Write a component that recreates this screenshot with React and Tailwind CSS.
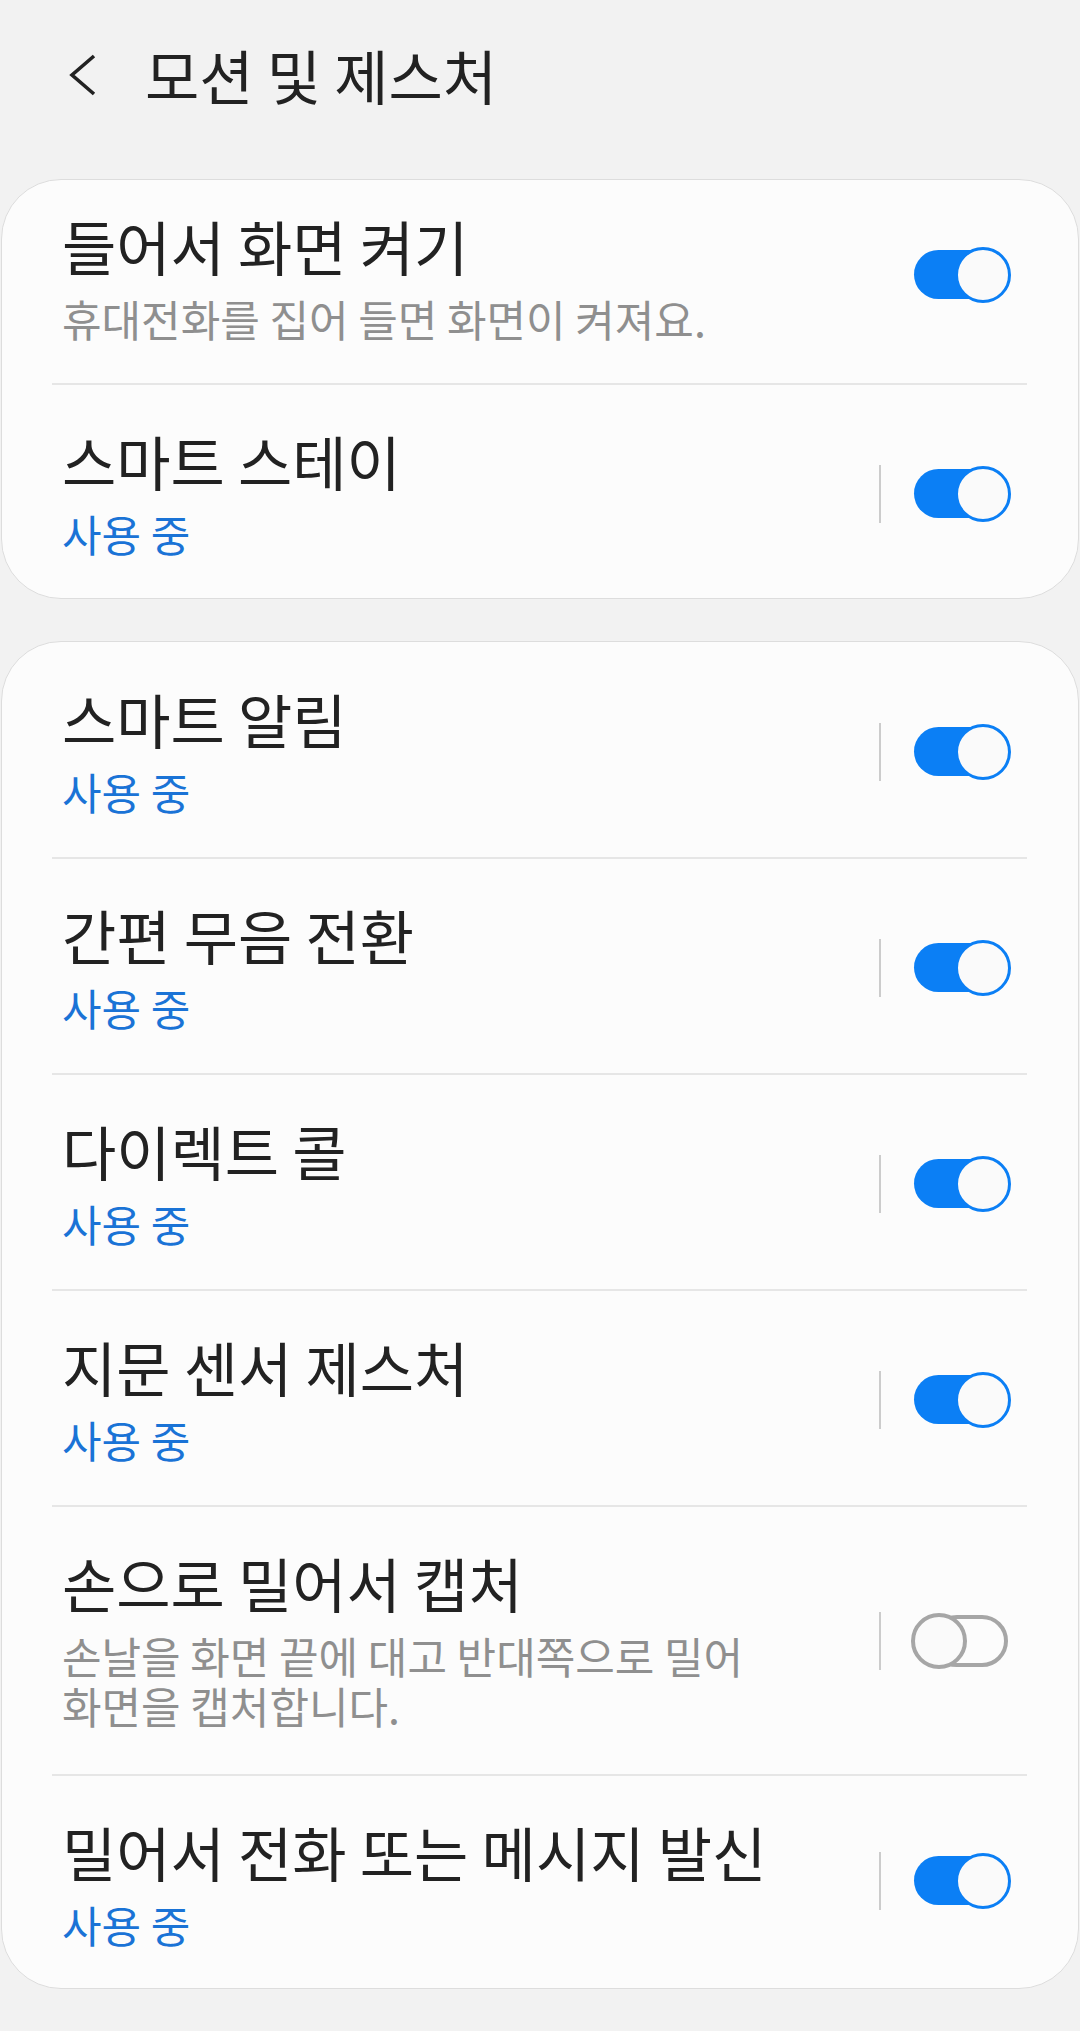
const FONT = { fontFamily: '"Noto Sans CJK KR", "Noto Sans", sans-serif' };

const firstCard = [
  {
    title: '들어서 화면 켜기',
    sub: ['휴대전화를 집어 들면 화면이 켜져요.'],
    tone: 'gray',
    on: true,
    noSep: true,
    pad: 'pt-[34px] pb-[40px]',
    lift: true,
  },
  { title: '스마트 스테이', sub: ['사용 중'], tone: 'blue', on: true, pad: 'pt-[44px] pb-[40px]' },
];

const secondCard = [
  { title: '스마트 알림', sub: ['사용 중'], tone: 'blue', on: true, pad: 'pt-[45px] pb-[41px]' },
  { title: '간편 무음 전환', sub: ['사용 중'], tone: 'blue', on: true, pad: 'pt-[44px] pb-[41px]' },
  { title: '다이렉트 콜', sub: ['사용 중'], tone: 'blue', on: true, pad: 'pt-[44px] pb-[41px]' },
  { title: '지문 센서 제스처', sub: ['사용 중'], tone: 'blue', on: true, pad: 'pt-[44px] pb-[41px]' },
  {
    title: '손으로 밀어서 캡처',
    sub: ['손날을 화면 끝에 대고 반대쪽으로 밀어 화면을 캡처합니다.'],
    tone: 'gray',
    on: false,
    pad: 'pt-[44px] pb-[44px]',
  },
  {
    title: '밀어서 전화 또는 메시지 발신',
    sub: ['사용 중'],
    tone: 'blue',
    on: true,
    pad: 'pt-[44px] pb-[39px]',
    lift: true,
  },
];

function BackArrow() {
  return (
    <svg width="28" height="44" viewBox="0 0 28 44" fill="none" className="shrink-0">
      <polyline
        points="25,3 3,22 25,41"
        stroke="#222222"
        strokeWidth="3.6"
        strokeLinecap="butt"
        strokeLinejoin="miter"
      />
    </svg>
  );
}

function Toggle({ on }) {
  if (on) {
    return (
      <div className="relative h-[58px] w-[100px] shrink-0">
        <div className="absolute left-[3px] top-[4px] h-[49px] w-[80px] rounded-full bg-[#0b7ff5]" />
        <div className="absolute right-0 top-[1px] h-[56px] w-[56px] rounded-full border-[3px] border-[#0b7ff5] bg-[#fafafa]" />
      </div>
    );
  }
  return (
    <div className="relative h-[58px] w-[100px] shrink-0">
      <div className="absolute left-[20px] right-[3px] top-[3px] h-[52px] rounded-full border-[4px] border-[#a6a6a6]" />
      <div className="absolute left-0 top-[1px] h-[56px] w-[56px] rounded-full border-[4px] border-[#a6a6a6] bg-[#fafafa]" />
    </div>
  );
}

function Row({ item }) {
  const subColor = item.tone === 'blue' ? 'text-[#1a73d6]' : 'text-[#8f8f8f]';
  return (
    <div className={`flex items-center pl-[60px] pr-[67px] ${item.pad}`}>
      <div className="min-w-0 flex-1 pr-[40px] break-keep">
        <div className="text-[59px] leading-[64px] text-[#222222]">{item.title}</div>
        <div className={`mt-[15px] text-[43px] leading-[50px] ${subColor}`}>{item.sub}</div>
      </div>
      <div className={`flex items-center gap-[30px] ${item.lift ? '-mt-[8px]' : ''}`}>
        <div className={`h-[58px] w-[2px] bg-[#cccccc] ${item.noSep ? 'invisible' : ''}`} />
        <Toggle on={item.on} />
      </div>
    </div>
  );
}

function Card({ items, className }) {
  return (
    <div className={`mx-[1px] rounded-[60px] border border-[#dddddd] bg-[#fcfcfc] ${className}`}>
      {items.map((item, i) => (
        <div key={item.title}>
          {i > 0 && <div className="ml-[50px] mr-[51px] h-[2px] bg-[#e6e6e6]" />}
          <Row item={item} />
        </div>
      ))}
    </div>
  );
}

export default function App() {
  return (
    <div className="min-h-[2031px] w-[1080px] bg-[#f2f2f2]" style={FONT}>
      <div className="flex h-[150px] items-center pl-[69px]">
        <BackArrow />
        <div className="ml-[48px] text-[59px] leading-[64px] text-[#222222]">모션 및 제스처</div>
      </div>
      <Card items={firstCard} className="mt-[29px]" />
      <Card items={secondCard} className="mt-[42px]" />
    </div>
  );
}
